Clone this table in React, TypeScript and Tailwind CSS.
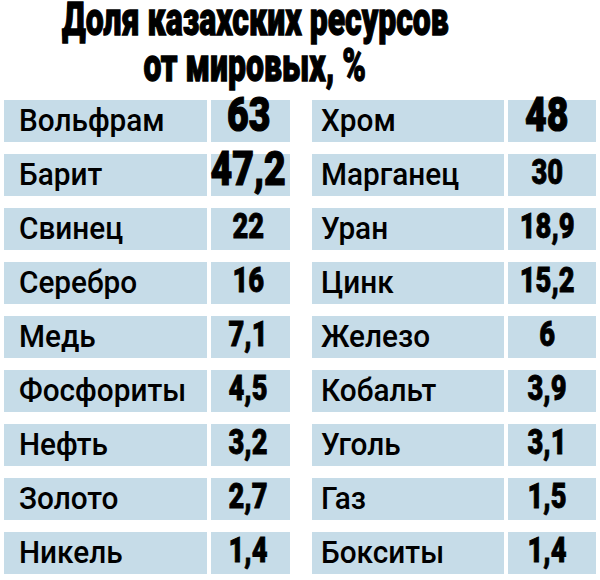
const left: [string, string, boolean?][] = [
  ["Вольфрам", "63", true],
  ["Барит", "47,2", true],
  ["Свинец", "22"],
  ["Серебро", "16"],
  ["Медь", "7,1"],
  ["Фосфориты", "4,5"],
  ["Нефть", "3,2"],
  ["Золото", "2,7"],
  ["Никель", "1,4"],
];

const right: [string, string, boolean?][] = [
  ["Хром", "48", true],
  ["Марганец", "30"],
  ["Уран", "18,9"],
  ["Цинк", "15,2"],
  ["Железо", "6"],
  ["Кобальт", "3,9"],
  ["Уголь", "3,1"],
  ["Газ", "1,5"],
  ["Бокситы", "1,4"],
];

function Name({ text, pad }: { text: string; pad: string }) {
  return (
    <div className={`h-[42px] bg-[#c6dce8] ${pad} overflow-hidden`}>
      <span className="inline-block origin-left scale-x-[0.93] whitespace-nowrap text-[32px] leading-[41px] font-medium">
        {text}
      </span>
    </div>
  );
}

function Value({ text, big, w, pr }: { text: string; big?: boolean; w: string; pr: string }) {
  return (
    <div className={`h-[42px] ${w} ${pr} bg-[#c6dce8] flex justify-center items-start`}>
      {big ? (
        <span className="inline-block scale-x-[0.78] whitespace-nowrap text-[48px] leading-[29px] font-black [-webkit-text-stroke:1.2px_black]">
          {text}
        </span>
      ) : (
        <span className="inline-block scale-x-[0.78] whitespace-nowrap text-[35px] leading-[38px] font-black [-webkit-text-stroke:0.8px_black]">
          {text}
        </span>
      )}
    </div>
  );
}

export default function App() {
  return (
    <div
      className="w-[600px] h-[580px] bg-white text-black overflow-hidden"
      style={{ fontFamily: "Roboto, 'Liberation Sans', sans-serif" }}
    >
      <div className="pt-[1px] h-[100px] pr-[90px] flex flex-col items-center text-[47px] leading-[46px] font-black [-webkit-text-stroke:1.3px_black]">
        <span className="inline-block -mt-[5px] scale-x-[0.68] whitespace-nowrap">Доля казахских ресурсов</span>
        <span className="inline-block scale-x-[0.68] whitespace-nowrap">от мировых, %</span>
      </div>
      <div className="pl-[4px] flex flex-col gap-[12px]">
        {left.map((l, i) => {
          const r = right[i];
          return (
            <div key={l[0]} className="flex">
              <div className="flex gap-[4px]">
                <div className="w-[203px]">
                  <Name text={l[0]} pad="pl-[15px]" />
                </div>
                <Value text={l[1]} big={l[2]} w="w-[79px]" pr="pr-[4px]" />
              </div>
              <div className="ml-[22px] flex gap-[4px]">
                <div className="w-[192px]">
                  <Name text={r[0]} pad="pl-[9px]" />
                </div>
                <Value text={r[1]} big={r[2]} w="w-[88px]" pr="pr-[10px]" />
              </div>
            </div>
          );
        })}
      </div>
    </div>
  );
}
